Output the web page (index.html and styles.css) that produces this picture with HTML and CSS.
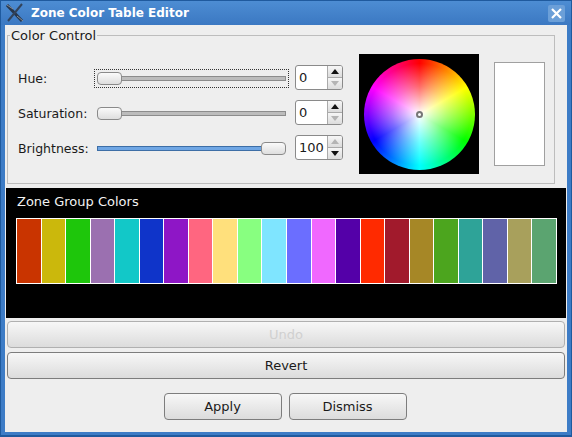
FILE: index.html
```html
<!DOCTYPE html>
<html lang="en">
<head>
    <meta charset="UTF-8">
    <title>Zone Color Table Editor</title>
    <link rel="stylesheet" href="styles.css">
</head>
<body>
<div class="window">
    <header class="titlebar">
        <svg class="appIcon" width="20" height="20" viewBox="0 0 20 20">
            <path d="M2 2 L17 18" stroke="#26364c" stroke-width="3"/>
            <path d="M17 1 L3 18" stroke="#33435a" stroke-width="2"/>
            <path d="M8 6 L2 2 M12 13 L18 18" stroke="#8a9099" stroke-width="1"/>
        </svg>
        <span class="titleText">Zone Color Table Editor</span>
        <div class="closeBtn">
            <svg width="11" height="11" viewBox="0 0 11 11">
                <path d="M1 1 L10 10 M10 1 L1 10" stroke="#fff" stroke-width="2.2"/>
            </svg>
        </div>
    </header>
    <main class="content">
        <fieldset class="colorControl">
            <legend>Color Control</legend>
            <div class="controls">
                <div class="sliders">
                    <div class="row">
                        <span class="rowLabel">Hue:</span>
                        <div class="slider focused">
                            <div class="thumb"></div>
                            <div class="track"></div>
                        </div>
                        <div class="spin">
                            <span class="spinValue">0</span>
                            <div class="spinBtns">
                                <div class="spinUp"><i class="arrowUp"></i></div>
                                <div class="spinDown off"><i class="arrowDown"></i></div>
                            </div>
                        </div>
                    </div>
                    <div class="row">
                        <span class="rowLabel">Saturation:</span>
                        <div class="slider">
                            <div class="thumb"></div>
                            <div class="track"></div>
                        </div>
                        <div class="spin">
                            <span class="spinValue">0</span>
                            <div class="spinBtns">
                                <div class="spinUp"><i class="arrowUp"></i></div>
                                <div class="spinDown off"><i class="arrowDown"></i></div>
                            </div>
                        </div>
                    </div>
                    <div class="row">
                        <span class="rowLabel">Brightness:</span>
                        <div class="slider">
                            <div class="fill"></div>
                            <div class="thumb"></div>
                        </div>
                        <div class="spin">
                            <span class="spinValue">100</span>
                            <div class="spinBtns">
                                <div class="spinUp off"><i class="arrowUp"></i></div>
                                <div class="spinDown"><i class="arrowDown"></i></div>
                            </div>
                        </div>
                    </div>
                </div>
                <div class="wheelBox">
                    <div class="wheel">
                        <div class="marker"></div>
                    </div>
                </div>
                <div class="preview"></div>
            </div>
        </fieldset>
        <section class="zonePanel">
            <p class="zoneTitle">Zone Group Colors</p>
            <div class="swatches">
                <div class="sw sw1"></div><div class="sw sw2"></div><div class="sw sw3"></div><div class="sw sw4"></div>
                <div class="sw sw5"></div><div class="sw sw6"></div><div class="sw sw7"></div><div class="sw sw8"></div>
                <div class="sw sw9"></div><div class="sw sw10"></div><div class="sw sw11"></div><div class="sw sw12"></div>
                <div class="sw sw13"></div><div class="sw sw14"></div><div class="sw sw15"></div><div class="sw sw16"></div>
                <div class="sw sw17"></div><div class="sw sw18"></div><div class="sw sw19"></div><div class="sw sw20"></div>
                <div class="sw sw21"></div><div class="sw sw22"></div>
            </div>
        </section>
        <button class="btn wide disabled">Undo</button>
        <button class="btn wide">Revert</button>
        <div class="actions">
            <button class="btn small">Apply</button>
            <button class="btn small">Dismiss</button>
        </div>
    </main>
</div>
</body>
</html>
```

FILE: styles.css
```css
* {
    margin: 0;
    padding: 0;
    box-sizing: border-box;
}
body {
    width: 572px;
    height: 437px;
    overflow: hidden;
    font-family: "DejaVu Sans", sans-serif;
    font-size: 13px;
    color: #1a1a1a;
}
.window {
    width: 572px;
    height: 437px;
    display: flex;
    flex-direction: column;
    background: #3d7cc6;
    border: 1px solid #1f5a9e;
    border-bottom-width: 2px;
    padding: 0 4px 3px 4px;
}

/* title bar */
.titlebar {
    height: 24px;
    flex: none;
    display: flex;
    align-items: center;
    margin: 0 -4px;
    padding: 0 6px 0 4px;
    background: linear-gradient(#4d8dd3, #3b78c2);
    color: #fff;
}
.appIcon {
    flex: none;
}
.titleText {
    margin-left: 6px;
    font-size: 12px;
    font-weight: bold;
    flex: 1;
}
.closeBtn {
    width: 17px;
    height: 17px;
    display: flex;
    align-items: center;
    justify-content: center;
    background: #6b9fd8;
    border-radius: 2px;
}

/* main area */
.content {
    flex: 1;
    background: #eeeeee;
    padding: 3px 1px 0 2px;
    display: flex;
    flex-direction: column;
}

.colorControl {
    width: 548px;
    height: 156px;
    border: 1px solid #bdbdbd;
    padding: 0;
}
.colorControl legend {
    margin-left: 2px;
    padding: 0 1px;
    height: 15px;
    line-height: 15px;
}
.controls {
    display: flex;
    align-items: flex-start;
    margin-top: 11px;
    padding-left: 10px;
}
.sliders {
    width: 325px;
    padding-top: 11px;
}
.row {
    height: 35px;
    display: flex;
    align-items: center;
    padding-bottom: 10px;
}
.rowLabel {
    width: 76px;
    padding-top: 2px;
    font-size: 12.5px;
}

.slider {
    width: 195px;
    height: 19px;
    margin-top: 1px;
    padding: 0 2px 0 2px;
    border: 1px dotted transparent;
    display: flex;
    align-items: center;
}
.slider.focused {
    border-color: #333;
}
.thumb {
    width: 25px;
    height: 13px;
    flex: none;
    display: flex;
    align-items: center;
    justify-content: center;
    border: 1px solid #8a8a8a;
    border-radius: 4px;
    background: linear-gradient(#fafafa, #dedede);
}
.thumb::after {
    content: "";
    width: 11px;
    height: 9px;
    background: radial-gradient(#bdbdbd 40%, transparent 45%) 0 0 / 2px 2px;
}
.track {
    flex: 1;
    height: 5px;
    background: #bcbcbc;
    border: 1px solid #8c8c8c;
    border-left: none;
}
.fill {
    flex: 1;
    height: 5px;
    background: #6fa6e4;
    border: 1px solid #3d6ea6;
    border-right: none;
}

.spin {
    width: 48px;
    height: 25px;
    margin-left: 6px;
    display: flex;
    background: #fff;
    border: 1px solid #8a8a8a;
    border-radius: 3px;
    overflow: hidden;
}
.spinValue {
    flex: 1;
    padding-left: 3px;
    line-height: 23px;
}
.spinBtns {
    width: 15px;
    border-left: 1px solid #aaa;
    display: flex;
    flex-direction: column;
}
.spinUp, .spinDown {
    flex: 1;
    display: flex;
    align-items: center;
    justify-content: center;
    background: linear-gradient(#f6f6f6, #dcdcdc);
}
.spinUp {
    border-bottom: 1px solid #aaa;
}
.arrowUp {
    border: 4px solid transparent;
    border-top: none;
    border-bottom: 5px solid #111;
}
.arrowDown {
    border: 4px solid transparent;
    border-bottom: none;
    border-top: 5px solid #111;
}
.off .arrowUp {
    border-bottom-color: #b4b4b4;
}
.off .arrowDown {
    border-top-color: #b4b4b4;
}

.wheelBox {
    width: 120px;
    height: 120px;
    margin-left: 16px;
    padding: 1px 0 0 1px;
    background: #000;
    display: flex;
    align-items: center;
    justify-content: center;
}
.wheel {
    width: 111px;
    height: 111px;
    border-radius: 50%;
    display: flex;
    align-items: center;
    justify-content: center;
    background: radial-gradient(closest-side, #fff, rgba(255,255,255,0.42) 50%, rgba(255,255,255,0) 92%),
        conic-gradient(#f00, #ff0, #0f0, #0ff, #00f, #f0f, #f00);
}
.marker {
    width: 7px;
    height: 7px;
    border: 2px solid #777;
    border-radius: 50%;
}
.preview {
    width: 51px;
    height: 104px;
    margin: 8px 0 0 15px;
    background: #fff;
    border: 1px solid #a0a0a0;
}

/* zone group colors */
.zonePanel {
    width: 560px;
    height: 130px;
    margin: 4px 0 0 -1px;
    background: #000;
    color: #f2f2f2;
    padding: 6px 0 0 11px;
}
.zoneTitle {
    height: 24px;
    line-height: 15px;
}
.swatches {
    width: 541px;
    height: 66px;
    margin-left: -1px;
    display: flex;
    gap: 1px;
    background: #fff;
    border: 1px solid #fff;
}
.sw {
    flex: 1;
}
.sw1 { background: #c93400; }
.sw2 { background: #cbb80c; }
.sw3 { background: #1ec60b; }
.sw4 { background: #9b70b0; }
.sw5 { background: #12c8c8; }
.sw6 { background: #0f34c9; }
.sw7 { background: #8e16c6; }
.sw8 { background: #ff6680; }
.sw9 { background: #ffe07c; }
.sw10 { background: #88ff80; }
.sw11 { background: #7fe5ff; }
.sw12 { background: #6b6eff; }
.sw13 { background: #f068ff; }
.sw14 { background: #5400a8; }
.sw15 { background: #ff2a00; }
.sw16 { background: #a11a2c; }
.sw17 { background: #a68726; }
.sw18 { background: #4ca51e; }
.sw19 { background: #2ea398; }
.sw20 { background: #6063a8; }
.sw21 { background: #a8a05c; }
.sw22 { background: #5ba470; }

/* buttons */
.btn {
    height: 27px;
    font-family: "DejaVu Sans", sans-serif;
    font-size: 13px;
    color: #1a1a1a;
    border: 1px solid #7d7d7d;
    border-radius: 4px;
    background: linear-gradient(#f7f7f7, #dcdcdc);
}
.wide {
    width: 558px;
    margin-bottom: 4px;
}
.wide:first-of-type {
    margin-top: 3px;
}
.disabled {
    color: #d0d0d0;
    border-color: #b0b0b0;
}
.actions {
    display: flex;
    justify-content: center;
    gap: 7px;
    width: 556px;
    margin-top: 10px;
}
.small {
    width: 118px;
}
```
